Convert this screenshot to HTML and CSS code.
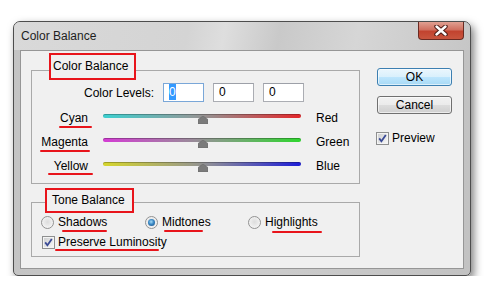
FILE: index.html
```html
<!DOCTYPE html>
<html lang="en">
<head>
    <meta charset="UTF-8">
    <title>Color Balance</title>
    <link rel="stylesheet" href="styles.css">
</head>
<body>
<div class="window">
    <div class="titlebar">
        <span class="title">Color Balance</span>
        <span class="close-btn">
            <svg width="14" height="11" viewBox="0 0 14 11">
                <path d="M2.5 1.5 L11.5 9.5 M11.5 1.5 L2.5 9.5" stroke="#4a1a14" stroke-width="4.4" stroke-linecap="round"/>
                <path d="M2.5 1.5 L11.5 9.5 M11.5 1.5 L2.5 9.5" stroke="#ffffff" stroke-width="2.4" stroke-linecap="round"/>
            </svg>
        </span>
    </div>

    <div class="client">
        <div class="groups">
            <!-- Color balance sliders -->
            <div class="group color-group">
                <div class="group-title cb-title">Color Balance</div>
                <div class="levels">
                    <span class="levels-label">Color Levels:</span>
                    <span class="field focused"><span class="sel">0</span></span>
                    <span class="field">0</span>
                    <span class="field">0</span>
                </div>
                <div class="slider-row">
                    <span class="left-label"><span class="mark mark-cyan">Cyan</span></span>
                    <div class="slider">
                        <div class="track cyan-red"></div>
                        <svg class="thumb" width="10" height="8" viewBox="0 0 10 8"><polygon points="5,0 10,3.5 10,8 0,8 0,3.5" fill="#7b7b7b" stroke="#6a6a6a" stroke-width="0.6"/></svg>
                    </div>
                    <span class="right-label">Red</span>
                </div>
                <div class="slider-row">
                    <span class="left-label"><span class="mark mark-magenta">Magenta</span></span>
                    <div class="slider">
                        <div class="track magenta-green"></div>
                        <svg class="thumb" width="10" height="8" viewBox="0 0 10 8"><polygon points="5,0 10,3.5 10,8 0,8 0,3.5" fill="#7b7b7b" stroke="#6a6a6a" stroke-width="0.6"/></svg>
                    </div>
                    <span class="right-label">Green</span>
                </div>
                <div class="slider-row">
                    <span class="left-label"><span class="mark mark-yellow">Yellow</span></span>
                    <div class="slider">
                        <div class="track yellow-blue"></div>
                        <svg class="thumb" width="10" height="8" viewBox="0 0 10 8"><polygon points="5,0 10,3.5 10,8 0,8 0,3.5" fill="#7b7b7b" stroke="#6a6a6a" stroke-width="0.6"/></svg>
                    </div>
                    <span class="right-label">Blue</span>
                </div>
            </div>

            <!-- Tone balance -->
            <div class="group tone-group">
                <div class="group-title tb-title">Tone Balance</div>
                <div class="radios">
                    <div class="radio-item"><span class="radio"></span><span class="mark mark-shadows">Shadows</span></div>
                    <div class="radio-item"><span class="radio on"></span><span class="mark mark-midtones">Midtones</span></div>
                    <div class="radio-item"><span class="radio"></span><span class="mark mark-highlights">Highlights</span></div>
                </div>
                <div class="check-row luminosity">
                    <svg class="checkbox" width="13" height="13" viewBox="0 0 13 13">
                        <defs>
                            <linearGradient id="cbg1" x1="0" y1="0" x2="1" y2="1">
                                <stop offset="0" stop-color="#cfd0d1"/>
                                <stop offset="1" stop-color="#f6f6f6"/>
                            </linearGradient>
                        </defs>
                        <rect x="0.5" y="0.5" width="12" height="12" fill="#f4f4f4" stroke="#8e8f8f"/>
                        <rect x="2" y="2" width="9" height="9" fill="url(#cbg1)"/>
                        <path d="M3.2 6.4 L5.4 9.2 L9.8 3" fill="none" stroke="#3a4a95" stroke-width="1.8"/>
                    </svg>
                    <span class="mark mark-preserve">Preserve Luminosity</span>
                </div>
            </div>
        </div>

        <div class="actions">
            <div class="btn btn-default">OK</div>
            <div class="btn">Cancel</div>
            <div class="check-row preview">
                <svg class="checkbox" width="13" height="13" viewBox="0 0 13 13">
                    <defs>
                        <linearGradient id="cbg2" x1="0" y1="0" x2="1" y2="1">
                            <stop offset="0" stop-color="#cfd0d1"/>
                            <stop offset="1" stop-color="#f6f6f6"/>
                        </linearGradient>
                    </defs>
                    <rect x="0.5" y="0.5" width="12" height="12" fill="#f4f4f4" stroke="#8e8f8f"/>
                    <rect x="2" y="2" width="9" height="9" fill="url(#cbg2)"/>
                    <path d="M3.2 6.4 L5.4 9.2 L9.8 3" fill="none" stroke="#3a4a95" stroke-width="1.8"/>
                </svg>
                <span>Preview</span>
            </div>
        </div>
    </div>
</div>
</body>
</html>
```

FILE: styles.css
```css
* {
    box-sizing: border-box;
}

body {
    margin: 0;
    background: #fff;
    font-family: "Liberation Sans", Arial, sans-serif;
    font-size: 12px;
    color: #000;
}

/* Window frame */
.window {
    width: 458px;
    height: 255px;
    margin: 21px 0 0 13px;
    border: 1px solid #4d4d4d;
    border-radius: 7px 7px 5px 5px;
    background: linear-gradient(to right, #c4c4c4, #cdcdcd 50%, #c2c2c2);
    box-shadow: 3px 4px 9px rgba(0,0,0,0.5);
    display: flex;
    flex-direction: column;
}

.titlebar {
    height: 28px;
    flex: none;
    display: flex;
    justify-content: space-between;
    align-items: flex-start;
    border-radius: 6px 6px 0 0;
    background: linear-gradient(100deg, #d9d9d9 0%, #d4d4d4 38%, #dedede 46%, #c9c9c9 58%, #d6d6d6 75%, #c6c6c6 100%);
}

.title {
    margin: 7px 0 0 7px;
    line-height: 14px;
    color: #1e1e1e;
}

.close-btn {
    width: 46px;
    height: 18px;
    margin-right: 6px;
    display: flex;
    align-items: center;
    justify-content: center;
    border: 1px solid #6a2a22;
    border-top: none;
    border-radius: 0 0 4px 4px;
    background: linear-gradient(#e0a092, #d07060 45%, #c2432f 55%, #c8553e);
}

.client {
    flex: 1;
    margin: 0 6px 6px;
    border: 1px solid #969696;
    background: #f0f0f0;
    display: flex;
}

.groups {
    margin: 19px 0 0 10px;
    width: 329px;
}

/* Group boxes */
.group {
    border: 1px solid #a9a9a9;
}

.group-title {
    width: fit-content;
    border: 2px solid #e8141b;
    background: #f0f0f0;
}

.cb-title {
    margin: -18px 0 0 17px;
    padding: 0 6px 0 2px;
    line-height: 23px;
}

.tb-title {
    margin: -15px 0 0 13px;
    padding: 0 7px 0 5px;
    line-height: 21px;
}

.color-group {
    padding-bottom: 5px;
}

.tone-group {
    margin-top: 18px;
    padding-bottom: 5px;
}

.levels {
    display: flex;
    align-items: center;
    gap: 9px;
    margin-top: 3px;
}

.levels-label {
    width: 122px;
    text-align: right;
}

.field {
    width: 41px;
    height: 19px;
    border: 1px solid #abadb3;
    border-top-color: #9da0a8;
    background: #fff;
    padding-left: 5px;
    line-height: 17px;
}

.field.focused {
    border-color: #7aa7d8;
}

.sel {
    background: #3399ff;
    color: #fff;
    padding: 1px 0;
}

/* Slider rows */
.slider-row {
    display: grid;
    grid-template-columns: 56px 198px auto;
    column-gap: 15px;
    align-items: center;
    height: 24px;
}

.slider-row:first-of-type {
    margin-top: 4px;
}

.levels + .slider-row {
    margin-top: 4px;
}

.left-label {
    text-align: right;
}

.slider {
    position: relative;
    height: 14px;
}

.track {
    margin-top: 3px;
    height: 4px;
    border-radius: 2px;
    box-shadow: inset 0 1px 0 rgba(0,0,0,0.25);
}

.cyan-red {
    background: linear-gradient(to right, #3cd0d0, #8f9a9a 45%, #9a8a8a 55%, #e4262a);
}

.magenta-green {
    background: linear-gradient(to right, #d43cd4, #9a8a9a 45%, #8a9a8a 55%, #2fd62f);
}

.yellow-blue {
    background: linear-gradient(to right, #d6d62c, #9a9a88 45%, #8a8a9a 55%, #1c1cd8);
}

.thumb {
    position: absolute;
    left: 95px;
    top: 5px;
}

/* Tone balance */
.radios {
    display: grid;
    grid-template-columns: 104px 103px auto;
    padding-left: 9px;
    height: 18px;
    align-items: center;
}

.radio-item {
    display: flex;
    align-items: center;
    gap: 4px;
}

.radio {
    width: 13px;
    height: 13px;
    border-radius: 50%;
    border: 1px solid #929292;
    background: radial-gradient(circle at 50% 45%, #dcdcdc 0, #ececec 50%, #fbfbfb 100%);
}

.radio.on::after {
    content: '';
    display: block;
    width: 7px;
    height: 7px;
    margin: 2px;
    border-radius: 50%;
    background: radial-gradient(circle at 45% 40%, #a6dcf8 0, #3a88c4 45%, #174a7e 100%);
}

.check-row {
    display: flex;
    align-items: center;
    gap: 3px;
}

.luminosity {
    margin-top: 2px;
    padding-left: 10px;
    height: 18px;
}

/* Red annotation underlines */
.mark {
    position: relative;
}

.mark::after {
    content: '';
    position: absolute;
    top: calc(50% + 8px);
    height: 2px;
    border-radius: 1px;
    background: #e8141b;
}

.mark-cyan::after { left: -1px; right: -4px; }
.mark-magenta::after { left: -1px; right: -2px; }
.mark-yellow::after { left: -6px; right: -5px; top: calc(50% + 7px); }
.mark-shadows::after { left: 4px; right: 0; }
.mark-midtones::after { left: 2px; right: 8px; }
.mark-highlights::after { left: 7px; right: -4px; top: calc(50% + 9px); }
.mark-preserve::after { left: -3px; right: 8px; top: calc(50% + 7px); }

/* Buttons */
.actions {
    margin: 17px 0 0 17px;
    width: 75px;
}

.btn {
    height: 18px;
    line-height: 16px;
    text-align: center;
    border: 1px solid #707070;
    border-radius: 3px;
    background: linear-gradient(#f2f2f2, #ebebeb 50%, #dddddd 50%, #cfcfcf);
    box-shadow: inset 0 0 0 1px rgba(255,255,255,0.6);
}

.btn + .btn {
    margin-top: 10px;
}

.btn-default {
    border-color: #3c7fb1;
    background: linear-gradient(#eaf6fd, #d9f0fc 50%, #bee6fd 50%, #a7d9f5);
}

.preview {
    margin: 17px 0 0 -1px;
    gap: 3px;
}
```
